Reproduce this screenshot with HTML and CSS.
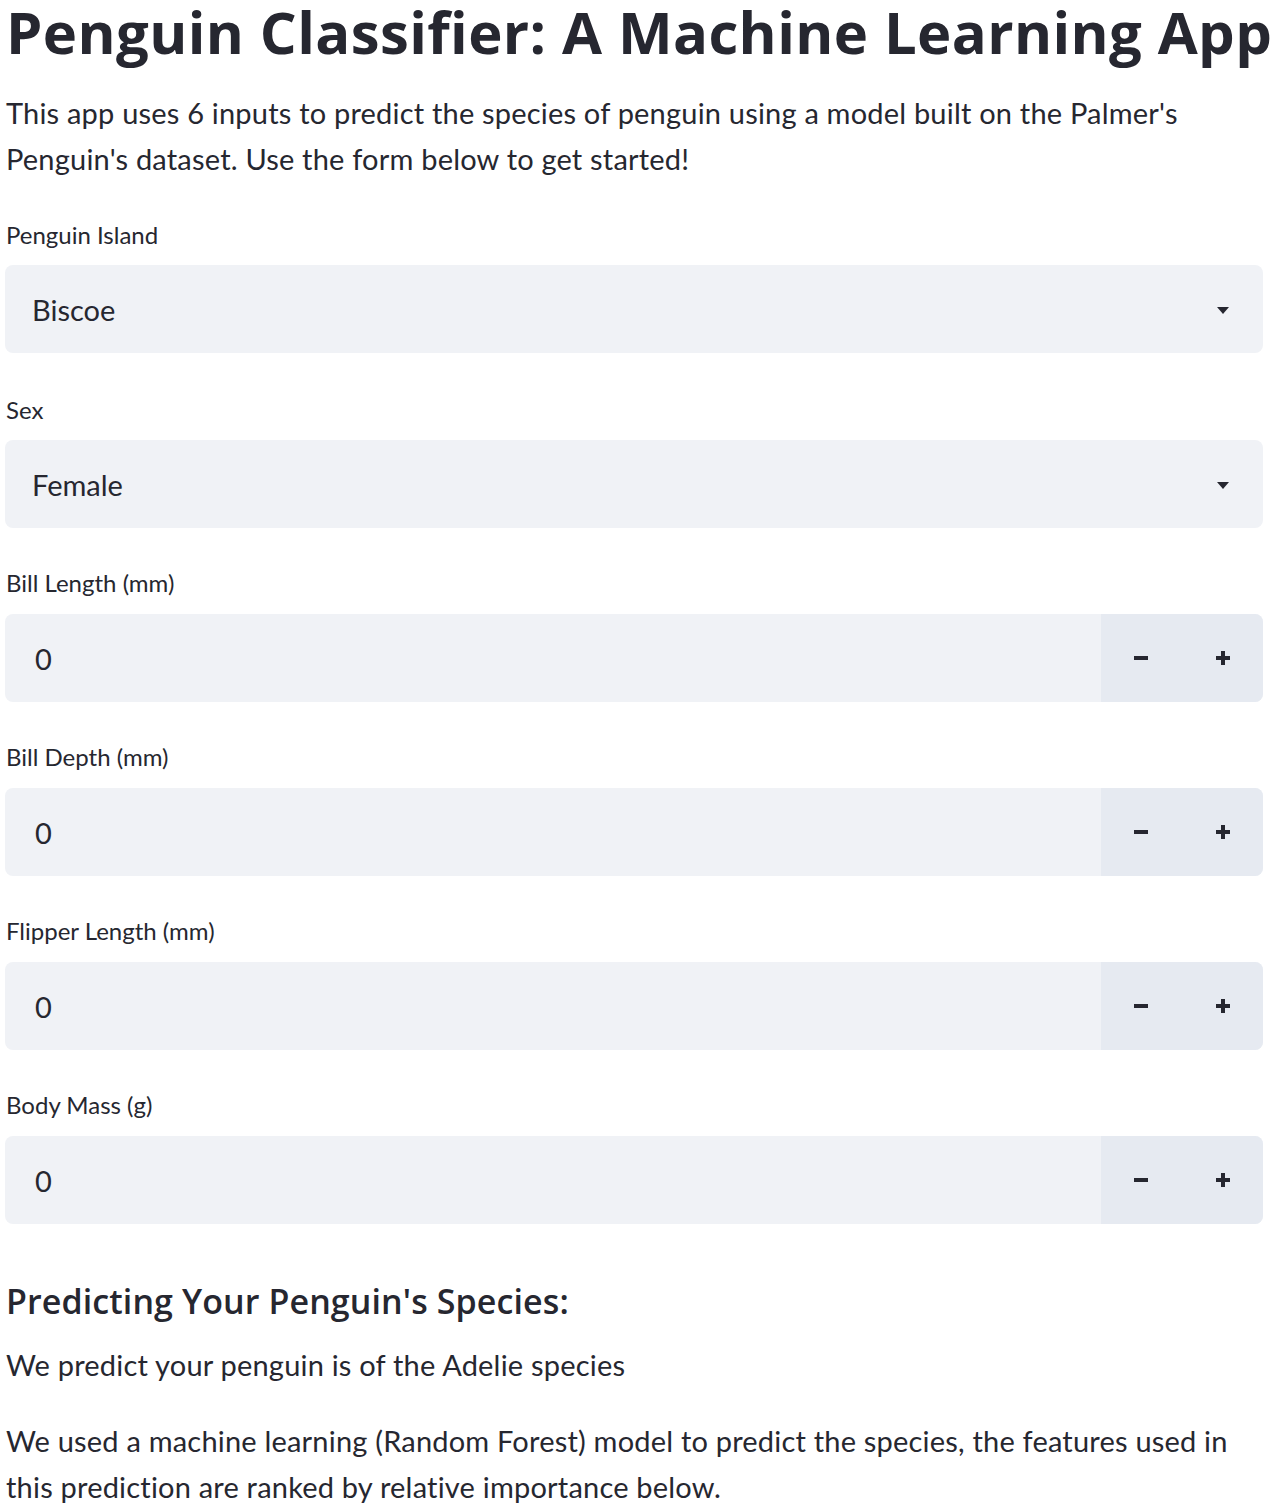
FILE: index.html
```html
<!DOCTYPE html>
<html lang="en">
<head>
<meta charset="utf-8">
<title>Penguin Classifier</title>
<link rel="stylesheet" href="styles.css">
</head>
<body>
<main class="app">
  <h1 class="title">Penguin Classifier: A Machine Learning App</h1>
  <p class="intro">This app uses 6 inputs to predict the species of penguin using a model built on the Palmer's Penguin's dataset. Use the form below to get started!</p>

  <div class="field">
    <label class="label">Penguin Island</label>
    <div class="select">
      <span class="value">Biscoe</span>
      <svg class="caret" width="12" height="7" viewBox="0 0 12 7"><path d="M0 0h12L6 7z" fill="#262730"/></svg>
    </div>
  </div>

  <div class="field">
    <label class="label">Sex</label>
    <div class="select">
      <span class="value">Female</span>
      <svg class="caret" width="12" height="7" viewBox="0 0 12 7"><path d="M0 0h12L6 7z" fill="#262730"/></svg>
    </div>
  </div>

  <div class="field">
    <label class="label">Bill Length (mm)</label>
    <div class="number">
      <span class="num-value">0</span>
      <div class="steps">
        <span class="step"><svg width="14" height="4" viewBox="0 0 14 4"><rect width="14" height="4" fill="#262730"/></svg></span>
        <span class="step"><svg width="14" height="14" viewBox="0 0 14 14"><path d="M5 0h4v5h5v4H9v5H5V9H0V5h5z" fill="#262730"/></svg></span>
      </div>
    </div>
  </div>

  <div class="field">
    <label class="label">Bill Depth (mm)</label>
    <div class="number">
      <span class="num-value">0</span>
      <div class="steps">
        <span class="step"><svg width="14" height="4" viewBox="0 0 14 4"><rect width="14" height="4" fill="#262730"/></svg></span>
        <span class="step"><svg width="14" height="14" viewBox="0 0 14 14"><path d="M5 0h4v5h5v4H9v5H5V9H0V5h5z" fill="#262730"/></svg></span>
      </div>
    </div>
  </div>

  <div class="field">
    <label class="label">Flipper Length (mm)</label>
    <div class="number">
      <span class="num-value">0</span>
      <div class="steps">
        <span class="step"><svg width="14" height="4" viewBox="0 0 14 4"><rect width="14" height="4" fill="#262730"/></svg></span>
        <span class="step"><svg width="14" height="14" viewBox="0 0 14 14"><path d="M5 0h4v5h5v4H9v5H5V9H0V5h5z" fill="#262730"/></svg></span>
      </div>
    </div>
  </div>

  <div class="field">
    <label class="label">Body Mass (g)</label>
    <div class="number">
      <span class="num-value">0</span>
      <div class="steps">
        <span class="step"><svg width="14" height="4" viewBox="0 0 14 4"><rect width="14" height="4" fill="#262730"/></svg></span>
        <span class="step"><svg width="14" height="14" viewBox="0 0 14 14"><path d="M5 0h4v5h5v4H9v5H5V9H0V5h5z" fill="#262730"/></svg></span>
      </div>
    </div>
  </div>

  <h3 class="subhead">Predicting Your Penguin's Species:</h3>
  <p class="text">We predict your penguin is of the Adelie species</p>
  <p class="text">We used a machine learning (Random Forest) model to predict the species, the features used in this prediction are ranked by relative importance below.</p>
</main>
</body>
</html>
```

FILE: styles.css
```css
html, body {
  margin: 0;
  padding: 0;
  background: #ffffff;
}

.app {
  width: 1258px;
  padding-left: 5px;
  color: #262730;
  font-family: "Lato", "Open Sans", sans-serif;
}

.title {
  margin: 0 -16px 0 0;
  font-family: "Open Sans", "Lato", sans-serif;
  font-size: 58px;
  font-weight: 700;
  line-height: 64px;
  letter-spacing: 0.4px;
  padding-left: 1px;
  white-space: nowrap;
}

.intro {
  margin: 26px 0 0;
  font-size: 29px;
  line-height: 46px;
  letter-spacing: 0.2px;
  padding-left: 1px;
}

.field {
  margin-top: 42px;
  display: flex;
  flex-direction: column;
}

.intro + .field {
  margin-top: 38px;
}

.label {
  font-size: 24px;
  line-height: 30px;
  padding-left: 1px;
}

.select {
  margin-top: 15px;
  height: 88px;
  background: #f0f2f6;
  border-radius: 8px;
  display: flex;
  align-items: center;
  justify-content: space-between;
  padding: 0 34px 0 27px;
}

.value {
  font-size: 29px;
}

.caret {
  margin-top: 2px;
}

.number {
  margin-top: 15px;
  height: 88px;
  background: #f0f2f6;
  border-radius: 8px;
  display: flex;
  align-items: center;
  justify-content: space-between;
  overflow: hidden;
}

.field:nth-of-type(n+3) .label {
  margin-top: -2px;
  margin-bottom: 1px;
}

.num-value {
  font-size: 29px;
  padding-left: 30px;
}

.steps {
  display: flex;
  height: 100%;
  width: 162px;
  background: #e6eaf1;
}

.step {
  flex: 1;
  display: flex;
  align-items: center;
  justify-content: center;
}

.step:first-child {
  padding-right: 2px;
}

.subhead {
  margin: 55px 0 0;
  font-family: "Open Sans", "Lato", sans-serif;
  font-size: 34px;
  font-weight: 600;
  line-height: 44px;
  letter-spacing: 0.1px;
  padding-left: 1px;
}

.text {
  margin: 19px 0 0;
  max-width: 1240px;
  font-size: 29px;
  line-height: 46px;
  letter-spacing: 0.2px;
  padding-left: 1px;
}

.text + .text {
  margin-top: 30px;
}
```
